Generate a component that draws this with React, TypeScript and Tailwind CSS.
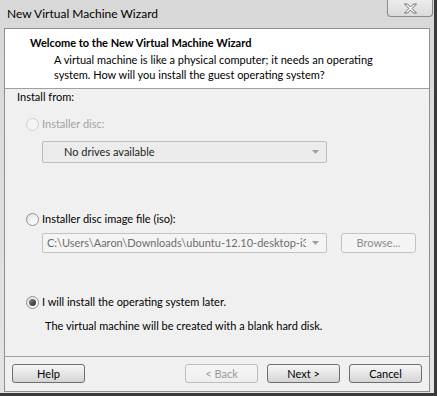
import React from "react";

// Windows 7 style "New Virtual Machine Wizard" dialog

const font = "font-['Segoe_UI','Lato',sans-serif]";

function Radio({ state }: { state: "disabled" | "off" | "on" }) {
  if (state === "disabled") {
    return (
      <span className="inline-block h-[13px] w-[13px] rounded-full border border-[#cfcfcf] bg-[#f4f4f4]" />
    );
  }
  return (
    <span className="flex h-[13px] w-[13px] items-center justify-center rounded-full border border-[#8e8f8f] bg-gradient-to-br from-[#dcdcdc] via-[#f4f4f4] to-[#ffffff]">
      {state === "on" && (
        <span className="h-[7px] w-[7px] rounded-full bg-gradient-to-br from-[#8a8a8a] to-[#2b2b2b]" />
      )}
    </span>
  );
}

function Arrow({ color = "#a0a0a0" }: { color?: string }) {
  return (
    <svg width="7" height="4" viewBox="0 0 7 4" className="shrink-0">
      <path d="M0 0h7L3.5 4z" fill={color} />
    </svg>
  );
}

function Button({ label, disabled }: { label: string; disabled?: boolean }) {
  return (
    <div
      className={
        "flex h-[19px] w-[73px] items-center justify-center rounded-[3px] border bg-gradient-to-b " +
        (disabled
          ? "border-[#bdbdbd] from-[#f4f4f4] via-[#f2f2f2] to-[#eeeeee] text-[#9a9a9a]"
          : "border-[#6e6e6e] from-[#f6f6f6] via-[#e6e6e6] to-[#d4d4d4] text-black")
      }
    >
      {label}
    </div>
  );
}

export default function App() {
  return (
    <div className={`${font} flex h-[396px] w-[437px] flex-col overflow-hidden border-r-[3px] border-b-[3px] border-r-[#3a3a3a] border-b-[#3a3a3a] bg-gradient-to-b from-[#d8d8d8] to-[#e4e4e4] text-[11px] leading-[16px] text-black`}>
      {/* Title bar */}
      <div className="flex h-[28px] shrink-0 items-start justify-between">
        <span className="mt-[5px] ml-[7px] whitespace-nowrap text-[12px] leading-[17px]">New Virtual Machine Wizard</span>
        <div className="mr-[1px] flex h-[17px] w-[46px] items-center justify-center rounded-b-[4px] border border-t-0 border-[#8a8a8a] bg-gradient-to-b from-[#ececec] to-[#dadada]">
          <svg width="15" height="11" viewBox="0 0 15 11">
            <path
              d="M1.5 1h3l3 3 3-3h3l-4.5 4.5 4.5 4.5h-3l-3-3-3 3h-3l4.5-4.5z"
              fill="#ffffff"
              stroke="#6c6c6c"
              strokeWidth="1"
              strokeLinejoin="round"
            />
          </svg>
        </div>
      </div>

      {/* Client area */}
      <div className="mx-[4px] mb-[1px] flex flex-1 flex-col border border-[#8f8f8f] bg-[#f0f0f0]">
        {/* Header */}
        <div className="h-[60px] shrink-0 whitespace-nowrap border-b border-[#a0a0a0] bg-white pl-[25px] pt-[6px]">
          <div className="font-bold">Welcome to the New Virtual Machine Wizard</div>
          <div className="mt-[1px] pl-[24px] leading-[15px]">
            A virtual machine is like a physical computer; it needs an operating
            <br />
            system. How will you install the guest operating system?
          </div>
        </div>

        {/* Body */}
        <div className="flex flex-1 flex-col whitespace-nowrap pl-[12px]">
          <div>Install from:</div>

          <div className="mt-[11px] flex items-center gap-[3px] pl-[9px] text-[#a3a3a3]">
            <Radio state="disabled" />
            <span>Installer disc:</span>
          </div>
          <div className="mt-[9px] ml-[25px] flex h-[22px] w-[285px] items-center justify-between rounded-[2px] border border-[#bcbcbc] bg-[#ececec] pl-[21px] pr-[7px] text-[#222]">
            <span>No drives available</span>
            <Arrow />
          </div>

          <div className="mt-[48px] flex items-center gap-[3px] pl-[9px]">
            <Radio state="off" />
            <span>Installer disc image file (iso):</span>
          </div>
          <div className="mt-[6px] ml-[25px] flex items-center gap-[14px]">
            <div className="flex h-[20px] w-[285px] items-center justify-between rounded-[2px] border border-[#c3c3c3] bg-[#f4f4f4] pl-[4px] pr-[7px] text-[#6d6d6d]">
              <span className="w-[259px] overflow-hidden">C:\Users\Aaron\Downloads\ubuntu-12.10-desktop-i386.iso</span>
              <Arrow />
            </div>
            <div className="flex h-[20px] w-[75px] items-center justify-center rounded-[3px] border border-[#c3c3c3] bg-[#f4f4f4] text-[#8d8d8d]">
              Browse...
            </div>
          </div>

          <div className="mt-[41px] flex items-center gap-[3px] pl-[9px]">
            <Radio state="on" />
            <span>I will install the operating system later.</span>
          </div>
          <div className="mt-[8px] pl-[28px]">The virtual machine will be created with a blank hard disk.</div>
        </div>

        {/* Footer */}
        <div className="flex h-[35px] shrink-0 items-start border-t border-[#a0a0a0] px-[7px] pt-[7px]">
          <Button label="Help" />
          <div className="flex-1" />
          <div className="flex gap-[9px]">
            <Button label="< Back" disabled />
            <Button label="Next >" />
            <Button label="Cancel" />
          </div>
        </div>
      </div>
    </div>
  );
}
